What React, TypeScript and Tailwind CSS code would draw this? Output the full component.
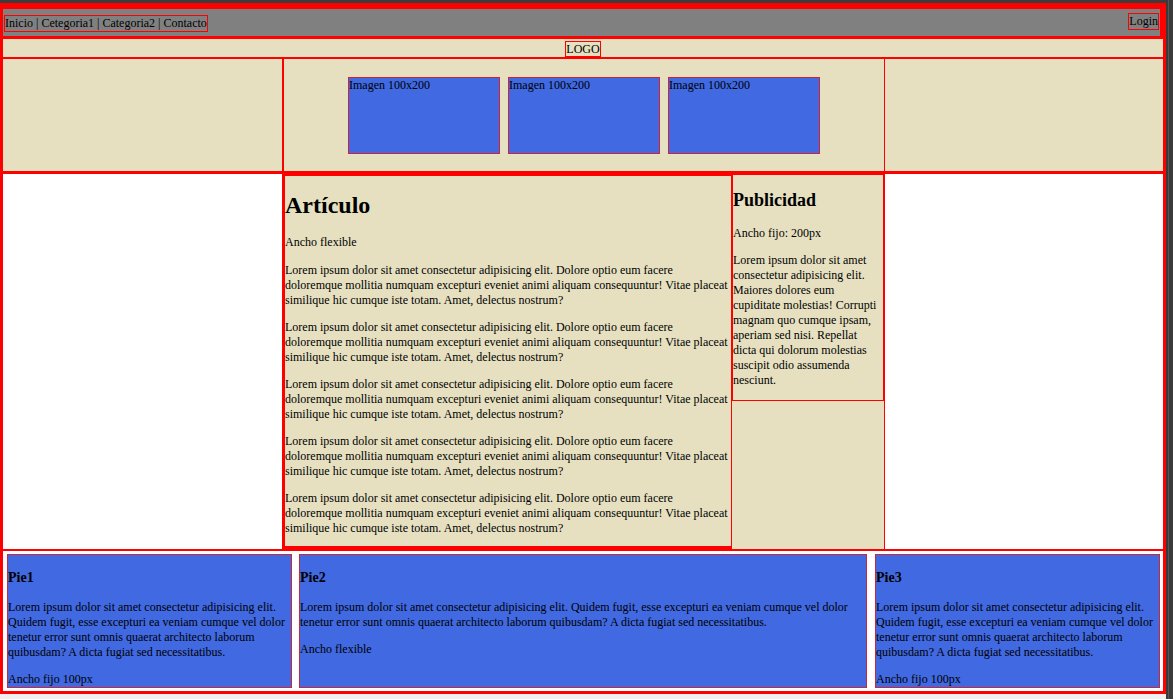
const lorem =
  "Lorem ipsum dolor sit amet consectetur adipisicing elit. Dolore optio eum facere doloremque mollitia numquam excepturi eveniet animi aliquam consequuntur! Vitae placeat similique hic cumque iste totam. Amet, delectus nostrum?";
const pieText =
  "Lorem ipsum dolor sit amet consectetur adipisicing elit. Quidem fugit, esse excepturi ea veniam cumque vel dolor tenetur error sunt omnis quaerat architecto laborum quibusdam? A dicta fugiat sed necessitatibus.";
const adText =
  "Lorem ipsum dolor sit amet consectetur adipisicing elit. Maiores dolores eum cupiditate molestias! Corrupti magnam quo cumque ipsam, aperiam sed nisi. Repellat dicta qui dolorum molestias suscipit odio assumenda nesciunt.";

function Imagen() {
  return (
    <div className="h-[77px] w-[152px] border border-[#d0203a] bg-[#4169e1] leading-[15px]">
      Imagen 100x200
    </div>
  );
}

function Pie({ title, note, className }: { title: string; note: string; className: string }) {
  return (
    <div className={`h-[134px] overflow-hidden border border-[#c8283e] bg-[#4169e1] ${className}`}>
      <h3 className="mb-[14px] mt-[15px] text-[14px] font-bold leading-[16px]">{title}</h3>
      <p className="mb-[12px]">{pieText}</p>
      <p>{note}</p>
    </div>
  );
}

export default function App() {
  return (
    <div className="flex h-[699px] w-[1173px] overflow-hidden bg-[#f0f0f0] font-['Liberation_Serif',serif] text-[12px] leading-[15px] text-black">
      <div className="flex w-[1166px] flex-col">
        <div className="h-[3px] bg-[#3c3c3c]" />
        <div className="flex flex-col border-[3px] border-[#ff0000]">
          {/* header */}
          <header className="flex h-[33px] items-start justify-between border-y-[3px] border-r-[3px] border-[#ff0000] bg-[#808080]">
            <nav className="ml-[1px] mt-[6px] h-[17px] border border-[#ff0000]">
              Inicio | Cetegoria1 | Categoria2 | Contacto
            </nav>
            <div className="mr-[1px] mt-[4px] h-[17px] border border-[#ff0000]">Login</div>
          </header>

          {/* logo */}
          <div className="flex h-[20px] items-start justify-center border-b-[2px] border-[#ff0000] bg-[#e6e0c0]">
            <div className="mt-[2px] h-[16px] border border-[#ff0000] leading-[14px]">LOGO</div>
          </div>

          {/* banner */}
          <div className="flex h-[115px] border-b-[3px] border-[#ff0000] bg-[#e6e0c0]">
            <div className="w-[279px]" />
            <div className="flex w-[603px] items-center justify-center gap-2 border-l-[2px] border-r border-[#ff0000]">
              <Imagen />
              <Imagen />
              <Imagen />
            </div>
            <div className="flex-1" />
          </div>

          {/* main */}
          <div className="flex bg-white">
            <div className="w-[279px]" />
            <div className="flex w-[603px]">
              <article className="w-[449px] border-b-[3px] border-l-[3px] border-t-[2px] border-[#ff0000] bg-[#e6e0c0] pb-[10px]">
                <h1 className="my-[16px] text-[24px] font-bold leading-[27px]">Artículo</h1>
                <p>Ancho flexible</p>
                {[0, 1, 2, 3, 4].map((i) => (
                  <p key={i} className={i === 0 ? "mt-[13px]" : "mt-[12px]"}>
                    {lorem}
                  </p>
                ))}
              </article>
              <div className="flex-1 border-x border-[#ff0000] bg-[#e6e0c0]">
                <aside className="border border-[#ff0000] pb-[12px]">
                  <h2 className="my-[15px] text-[18px] font-bold leading-[21px]">Publicidad</h2>
                  <p>Ancho fijo: 200px</p>
                  <p className="mt-[12px]">{adText}</p>
                </aside>
              </div>
            </div>
            <div className="flex-1" />
          </div>

          {/* footer */}
          <footer className="flex gap-[7px] border-t-[2px] border-[#ff0000] bg-white pb-[3px] pl-[4px] pr-[3px] pt-[3px]">
            <Pie title="Pie1" note="Ancho fijo 100px" className="w-[285px] shrink-0" />
            <Pie title="Pie2" note="Ancho flexible" className="flex-1" />
            <Pie title="Pie3" note="Ancho fijo 100px" className="ml-[1px] w-[285px] shrink-0" />
          </footer>
        </div>
      </div>
      <div className="flex w-[7px] bg-[#3a3a3a]">
        <div className="ml-[2px] w-[1px] bg-[#575757]" />
      </div>
    </div>
  );
}
